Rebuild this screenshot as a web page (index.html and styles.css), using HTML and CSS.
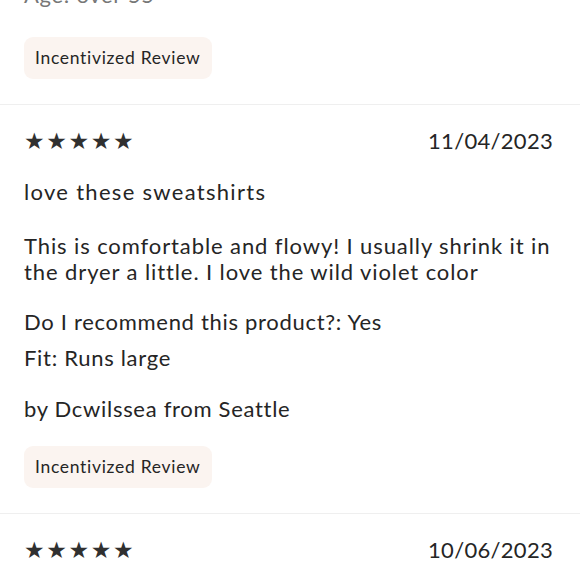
FILE: index.html
```html
<!DOCTYPE html>
<html>
<head>
<meta charset="utf-8">
<link rel="stylesheet" href="styles.css">
</head>
<body>
<div class="review review-tail">
  <p class="meta-age">Age: over 55</p>
  <span class="badge">Incentivized Review</span>
</div>
<div class="review">
  <div class="head">
    <div class="stars">★★★★★</div>
    <div class="date">11/04/2023</div>
  </div>
  <p class="title">love these sweatshirts</p>
  <p class="body">This is comfortable and flowy! I usually shrink it in the dryer a little. I love the wild violet color</p>
  <p class="line first">Do I recommend this product?: Yes</p>
  <p class="line">Fit: Runs large</p>
  <p class="author">by Dcwilssea from Seattle</p>
  <span class="badge">Incentivized Review</span>
</div>
<div class="review">
  <div class="head">
    <div class="stars">★★★★★</div>
    <div class="date">10/06/2023</div>
  </div>
</div>
</body>
</html>
```
FILE: styles.css
```css
html, body {
  margin: 0;
  padding: 0;
  background: #fff;
}
body {
  font-family: Lato, "Noto Sans", sans-serif;
  color: #252525;
  font-size: 22px;
  letter-spacing: 0.7px;
  overflow: hidden;
}
p { margin: 0; }
.review {
  padding: 0 27px 25px 24px;
  border-bottom: 1px solid #efefef;
  display: flex;
  flex-direction: column;
  align-items: flex-start;
}
.review-tail {
  margin-top: -20px;
}
.meta-age {
  color: #777;
  line-height: 30px;
  margin-bottom: 27px;
}
.badge {
  display: inline-block;
  background: #fbf4f0;
  border-radius: 9px;
  font-size: 17.5px;
  line-height: 42px;
  padding: 0 12px 0 11px;
  letter-spacing: 0.7px;
}
.head {
  align-self: stretch;
  display: flex;
  justify-content: space-between;
  align-items: center;
  padding-top: 23px;
  line-height: 26px;
}
.stars {
  font-family: "DejaVu Sans", sans-serif;
  font-size: 23px;
  letter-spacing: 1.6px;
  color: #303030;
}
.date {
  font-size: 22px;
  letter-spacing: 0.3px;
}
.title {
  margin-top: 25px;
  line-height: 26px;
  letter-spacing: 1.3px;
}
.body {
  margin-top: 28px;
  line-height: 26px;
  letter-spacing: 0.9px;
}
.line {
  line-height: 36px;
}
.line.first { margin-top: 19px; }
.author {
  margin-top: 18px;
  line-height: 30px;
  margin-bottom: 22px;
}
```
